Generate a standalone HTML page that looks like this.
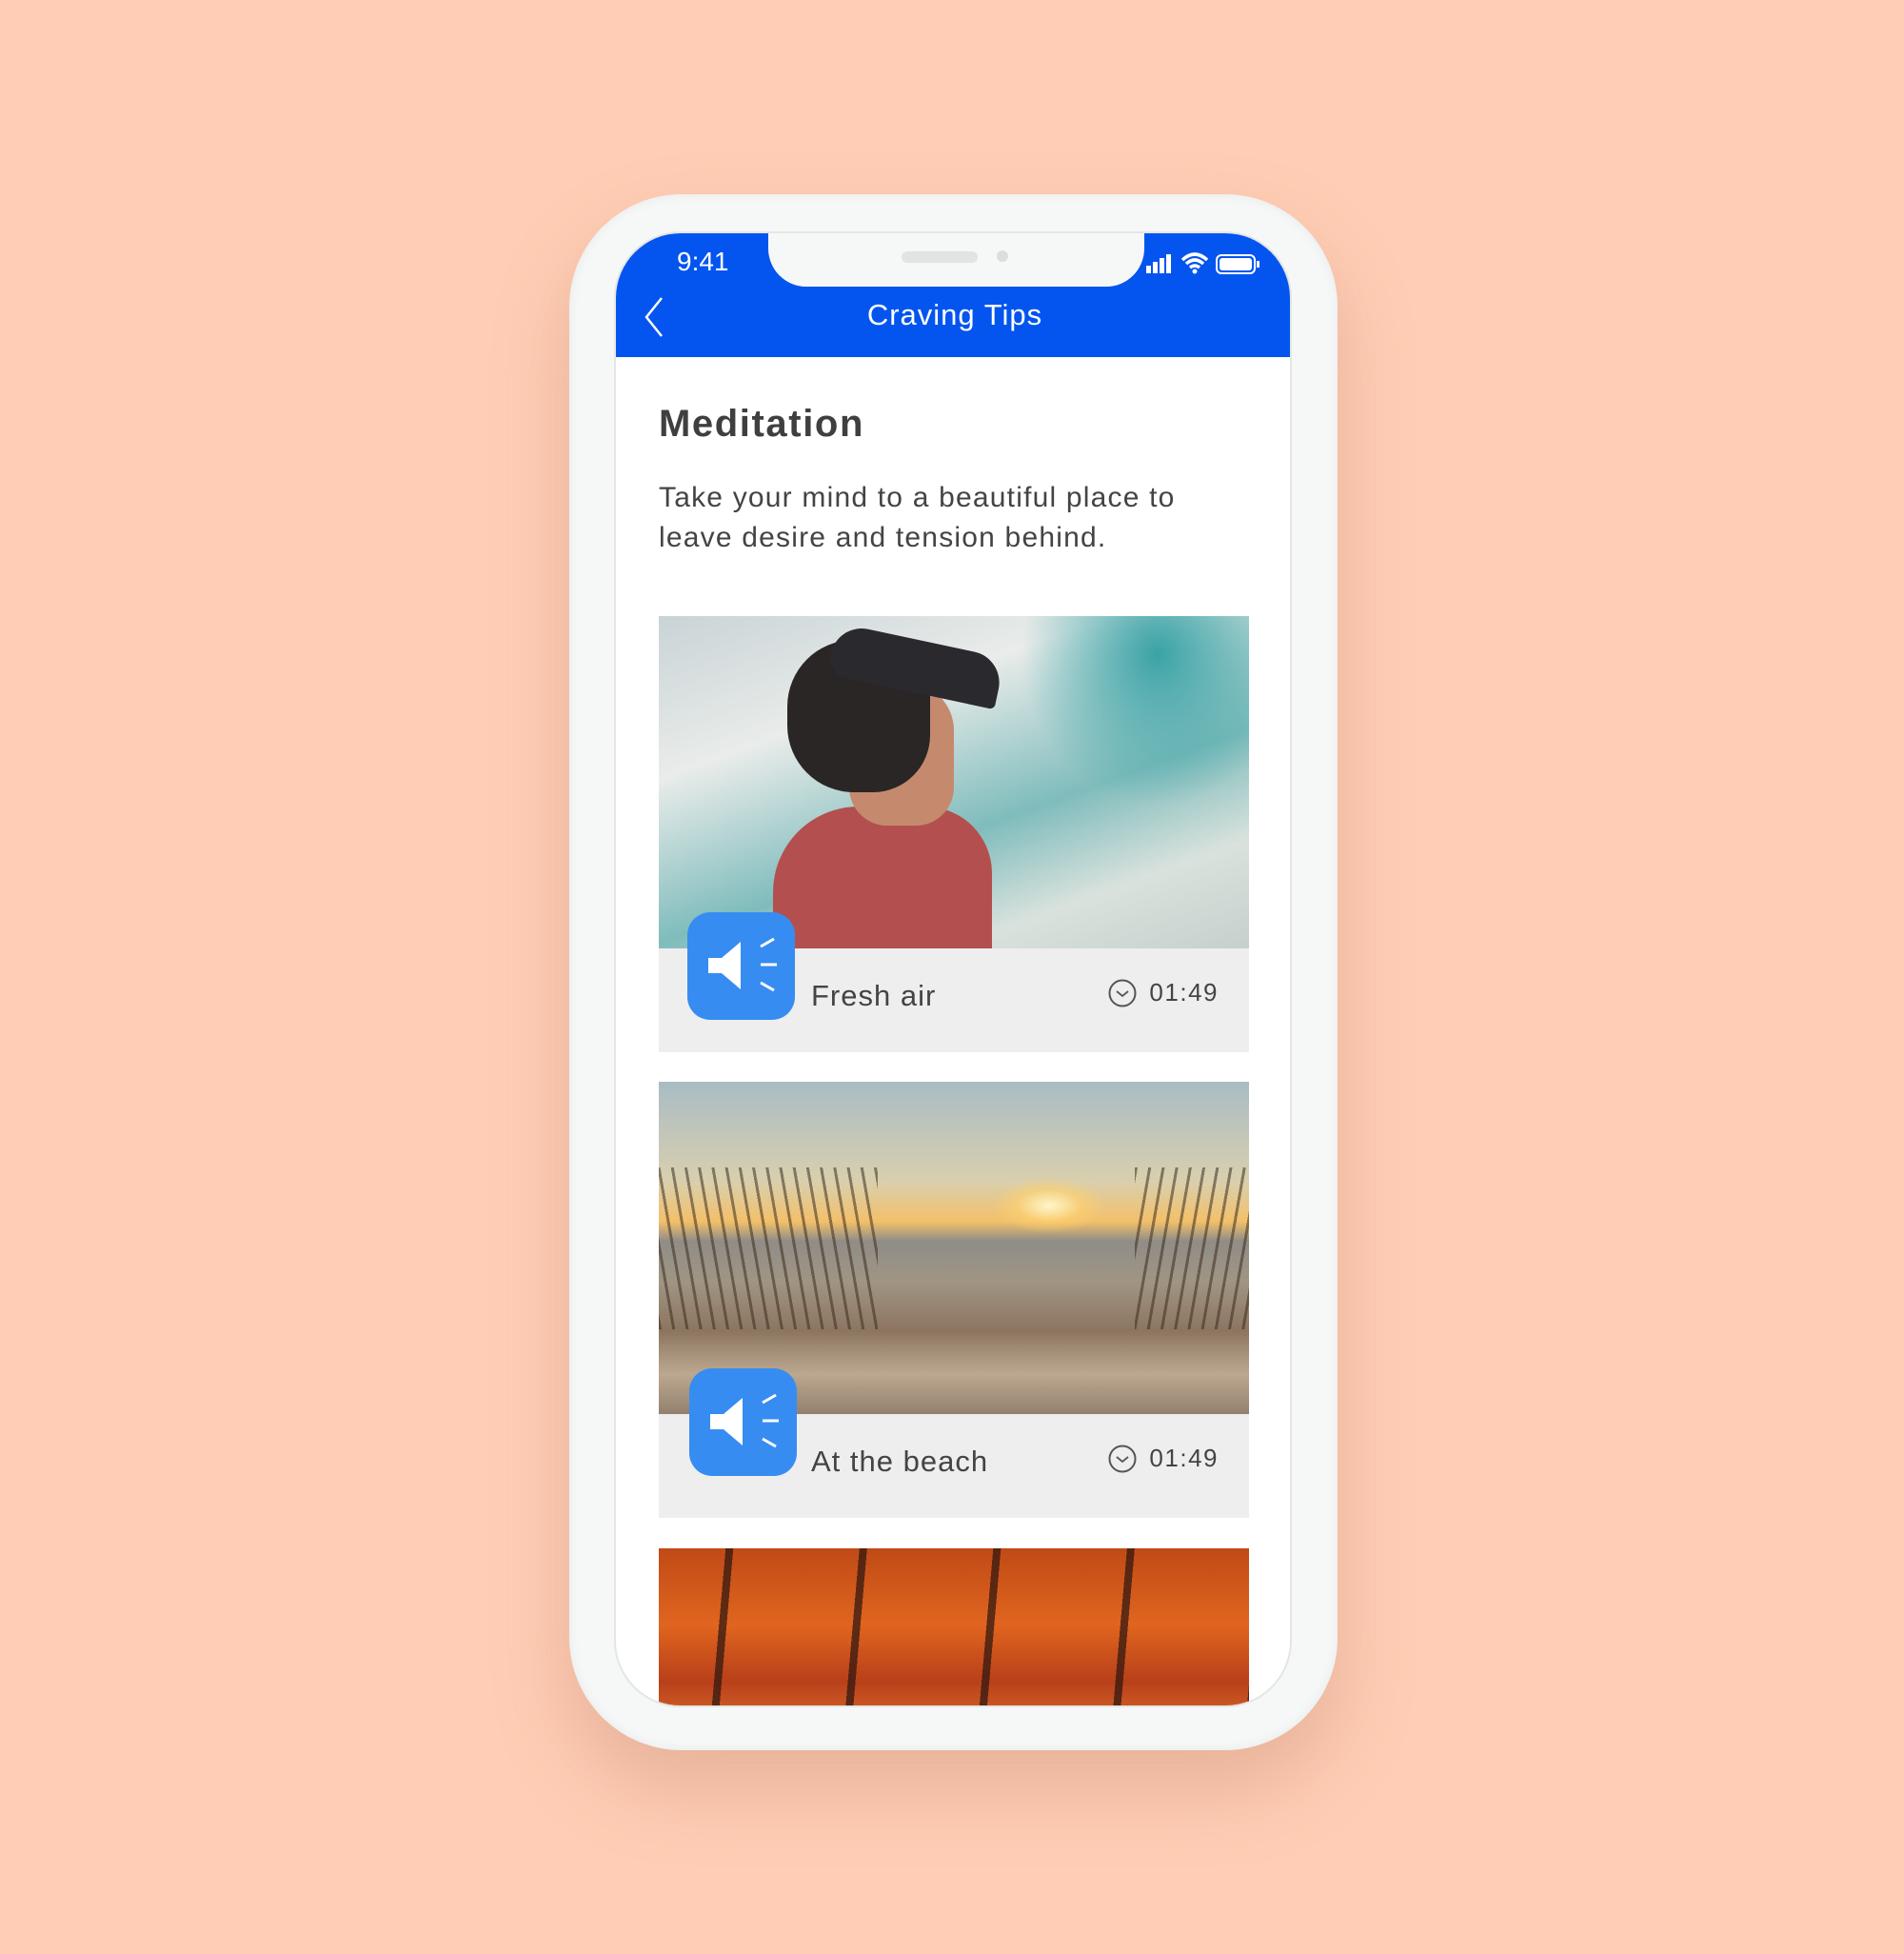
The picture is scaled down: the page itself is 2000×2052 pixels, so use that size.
<!DOCTYPE html>
<html><head><meta charset="utf-8"><style>
*{margin:0;padding:0;box-sizing:border-box}
body{width:2000px;height:2052px;background:#ffcdb5;position:relative;overflow:hidden;font-family:"Liberation Sans",sans-serif}
.phone{position:absolute;left:598px;top:204px;width:807px;height:1634px;border-radius:118px;background:#f6f7f7;box-shadow:0 40px 80px rgba(160,100,70,.25),inset 0 0 12px rgba(0,0,0,.06)}
.screen{position:absolute;left:645px;top:243px;width:712px;height:1550px;border-radius:70px;overflow:hidden;background:#fff;border:2px solid #e4e6e6}
.hdr{position:absolute;left:0;top:0;width:712px;height:130px;background:#0455ef}
.notch{position:absolute;left:160px;top:-2px;width:395px;height:58px;background:#f6f7f7;border-radius:0 0 40px 40px}
.abs{position:absolute}
.card{position:absolute;left:45px;width:620px;background:#eeeeee}
.img{position:absolute;left:0;top:0;width:620px;height:349px;overflow:hidden}
.spk{position:absolute;left:30px;width:113px;height:113px;border-radius:24px;background:#378cf2}
.lbl{position:absolute;left:160px;font-size:31px;color:#444;letter-spacing:1px}
.tm{position:absolute;right:32px;font-size:26px;color:#444;letter-spacing:1.5px}
.clk{position:absolute;width:30px;height:30px}
</style></head><body>
<div class="phone"></div>
<div class="screen">
 <div class="hdr"><div class="notch"></div>
  <div class="abs" style="left:300px;top:19px;width:80px;height:12px;border-radius:6px;background:#e2e4e4"></div>
  <div class="abs" style="left:400px;top:18px;width:12px;height:12px;border-radius:6px;background:#dcdede"></div>
  <div class="abs" style="left:64px;top:14px;color:#fff;font-size:28px">9:41</div>
  <svg class="abs" style="left:555px;top:18px" width="130" height="28" viewBox="0 0 130 28">
   <rect x="2" y="16" width="5" height="8" fill="#fff"/><rect x="9" y="12" width="5" height="12" fill="#fff"/><rect x="16" y="8" width="5" height="16" fill="#fff"/><rect x="23" y="4" width="5" height="20" fill="#fff"/>
   <path d="M40 10 Q53 -2 66 10 M44 14 Q53 6 62 14 M48 18 Q53 14 58 18" stroke="#fff" stroke-width="3.5" fill="none"/><circle cx="53" cy="22" r="2.5" fill="#fff"/>
   <rect x="76" y="5" width="40" height="19" rx="5" stroke="#fff" stroke-width="2" fill="none"/><rect x="79" y="8" width="34" height="13" rx="3" fill="#fff"/><rect x="118" y="11" width="3" height="7" fill="#fff"/>
  </svg>
  <svg class="abs" style="left:28px;top:66px" width="24" height="44"><path d="M20 2 L4 22 L20 42" stroke="#fff" stroke-width="2.5" fill="none"/></svg>
  <div class="abs" style="left:0;width:712px;top:68px;text-align:center;color:#fff;font-size:31px;letter-spacing:1px">Craving Tips</div>
 </div>
 <div class="abs" style="left:45px;top:178px;font-size:40px;font-weight:bold;color:#3f3f3f;letter-spacing:1.6px">Meditation</div>
 <div class="abs" style="left:45px;top:257px;font-size:30px;line-height:42px;color:#444;width:660px;letter-spacing:1.2px">Take your mind to a beautiful place to<br>leave desire and tension behind.</div>

 <div class="card" style="top:402px;height:458px">
  <div class="img" style="background:linear-gradient(160deg,#c9d3d6 0%,#e9ecea 30%,#7fbcbc 60%,#d9e2dd 80%,#c5d0cc 100%)">
   <div class="abs" style="left:380px;top:0;width:240px;height:200px;background:radial-gradient(ellipse at 60% 20%,#3aa3a6,transparent 70%)"></div>
   <div class="abs" style="left:120px;top:200px;width:230px;height:170px;background:#b3504f;border-radius:90px 70px 0 0"></div>
   <div class="abs" style="left:200px;top:70px;width:110px;height:150px;background:#c58a6e;border-radius:40px 50px 40px 40px"></div>
   <div class="abs" style="left:135px;top:25px;width:150px;height:160px;background:#2b2626;border-radius:70px 40px 60px 70px"></div>
   <div class="abs" style="left:180px;top:25px;width:180px;height:55px;background:#2a2a2e;border-radius:60px 60px 10px 40px;transform:rotate(12deg)"></div>
  </div>
  <div class="spk" style="top:311px"><svg width="113" height="113"><path d="M22 48 H36 L56 31 V81 L36 64 H22 Z" fill="#fff"/><path d="M77 36 L91 28 M77 55 H94 M77 74 L91 82" stroke="#fff" stroke-width="3"/></svg></div>
  <div class="lbl" style="top:381px">Fresh air</div>
  <svg class="clk" style="left:472px;top:381px" viewBox="0 0 30 30"><circle cx="15" cy="15" r="13.5" stroke="#555" stroke-width="2" fill="none"/><path d="M9 13 L15 18 L21 13" stroke="#555" stroke-width="1.8" fill="none"/></svg>
  <div class="tm" style="top:380px">01:49</div>
 </div>

 <div class="card" style="top:891px;height:458px">
  <div class="img" style="background:linear-gradient(180deg,#a9bcc4 0%,#d9cfae 30%,#f3c06a 42%,#8f8d87 48%,#a09584 60%,#8c7560 75%,#bca890 88%,#93806e 100%)">
   <div class="abs" style="left:350px;top:100px;width:120px;height:60px;background:radial-gradient(ellipse,#fff6c8,rgba(255,210,110,.6) 40%,transparent 70%)"></div>
   <div class="abs" style="left:0;top:90px;width:230px;height:170px;background:repeating-linear-gradient(80deg,rgba(60,45,30,.55) 0 3px,transparent 3px 14px)"></div>
   <div class="abs" style="left:500px;top:90px;width:120px;height:170px;background:repeating-linear-gradient(100deg,rgba(60,45,30,.55) 0 3px,transparent 3px 14px)"></div>
  </div>
  <div class="spk" style="top:301px;left:32px"><svg width="113" height="113"><path d="M22 48 H36 L56 31 V81 L36 64 H22 Z" fill="#fff"/><path d="M77 36 L91 28 M77 55 H94 M77 74 L91 82" stroke="#fff" stroke-width="3"/></svg></div>
  <div class="lbl" style="top:381px">At the beach</div>
  <svg class="clk" style="left:472px;top:381px" viewBox="0 0 30 30"><circle cx="15" cy="15" r="13.5" stroke="#555" stroke-width="2" fill="none"/><path d="M9 13 L15 18 L21 13" stroke="#555" stroke-width="1.8" fill="none"/></svg>
  <div class="tm" style="top:380px">01:49</div>
 </div>

 <div class="card" style="top:1381px;height:200px;background:linear-gradient(180deg,#c04a17,#e0651f 40%,#b8401a 70%,#e4742e)">
  <div class="abs" style="left:0;top:0;width:620px;height:200px;background:repeating-linear-gradient(95deg,transparent 0 70px,rgba(40,20,15,.7) 70px 78px,transparent 78px 140px)"></div>
 </div>
</div>
</body></html>
